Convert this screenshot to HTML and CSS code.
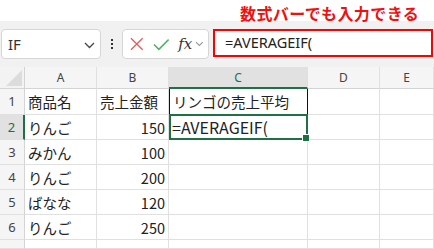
FILE: index.html
```html
<!DOCTYPE html>
<html lang="ja">
<head>
    <meta charset="UTF-8">
    <meta name="viewport" content="width=device-width, initial-scale=1.0">
    <title>数式バー</title>
    <link rel="stylesheet" href="styles.css">
</head>
<body>
    <div class="caption"><span class="caption-text">数式バーでも入力できる</span></div>
    <div class="toolbar">
        <div class="name-box">
            <span class="name-text">IF</span>
            <svg class="chevron" width="11" height="7" viewBox="0 0 11 7"><path d="M1 1 L5.5 5.5 L10 1" fill="none" stroke="#444" stroke-width="1.3"/></svg>
        </div>
        <div class="dots"><i></i><i></i><i></i></div>
        <div class="fx-box">
            <svg width="14" height="14" viewBox="0 0 14 14"><path d="M1 1 L13 13 M13 1 L1 13" stroke="#e06060" stroke-width="1.4"/></svg>
            <svg width="17" height="13" viewBox="0 0 17 13"><path d="M1 6.5 L6 11.5 L16 1.5" fill="none" stroke="#4caf6a" stroke-width="1.5"/></svg>
            <span class="fx">fx</span>
            <svg width="9" height="6" viewBox="0 0 9 6"><path d="M1 1 L4.5 4.5 L8 1" fill="none" stroke="#999" stroke-width="1.2"/></svg>
        </div>
        <div class="formula">=AVERAGEIF(</div>
    </div>
    <div class="sheet">
        <div class="corner"><span class="tri"></span></div>
        <div class="col-head">A</div>
        <div class="col-head">B</div>
        <div class="col-head selected">C</div>
        <div class="col-head">D</div>
        <div class="col-head">E</div>

        <div class="row-head">1</div>
        <div class="cell">商品名</div>
        <div class="cell">売上金額</div>
        <div class="cell boxed">リンゴの売上平均</div>
        <div class="cell"></div>
        <div class="cell"></div>

        <div class="row-head selected">2</div>
        <div class="cell">りんご</div>
        <div class="cell num">150</div>
        <div class="cell active">=AVERAGEIF(</div>
        <div class="cell"></div>
        <div class="cell"></div>

        <div class="row-head">3</div>
        <div class="cell">みかん</div>
        <div class="cell num">100</div>
        <div class="cell"></div>
        <div class="cell"></div>
        <div class="cell"></div>

        <div class="row-head">4</div>
        <div class="cell">りんご</div>
        <div class="cell num">200</div>
        <div class="cell"></div>
        <div class="cell"></div>
        <div class="cell"></div>

        <div class="row-head">5</div>
        <div class="cell">ばなな</div>
        <div class="cell num">120</div>
        <div class="cell"></div>
        <div class="cell"></div>
        <div class="cell"></div>

        <div class="row-head">6</div>
        <div class="cell">りんご</div>
        <div class="cell num">250</div>
        <div class="cell"></div>
        <div class="cell"></div>
        <div class="cell"></div>

        <div class="row-head"></div>
        <div class="cell"></div>
        <div class="cell"></div>
        <div class="cell"></div>
        <div class="cell"></div>
        <div class="cell"></div>
    </div>
</body>
</html>
```

FILE: styles.css
```css
body {
    margin: 0;
    width: 434px;
    height: 249px;
    overflow: hidden;
    background: white;
    font-family: "Noto Sans CJK JP", "Noto Sans", sans-serif;
}
.caption {
    height: 21px;
    box-sizing: border-box;
    padding: 1px 0 0 240px;
    box-shadow: 0 1px 2px rgba(0, 0, 0, 0.12);
}
.caption-text {
    display: inline-block;
    color: #f01010;
    font-weight: bold;
    font-size: 16px;
    line-height: 20px;
    letter-spacing: 0.4px;
    white-space: nowrap;
}
.toolbar {
    height: 46px;
    box-sizing: border-box;
    background: #f1f1f1;
    display: flex;
    align-items: flex-start;
    padding: 8px 1px 0 1px;
}
.name-box {
    width: 100px;
    height: 30px;
    box-sizing: border-box;
    background: white;
    border: 1px solid #d6d6d6;
    border-radius: 4px;
    display: flex;
    align-items: center;
    justify-content: space-between;
    padding: 0 5px 0 6px;
}
.name-text {
    font-family: "Noto Sans", sans-serif;
    font-size: 15px;
    color: #333;
}
.chevron {
    margin-top: 2px;
}
.dots {
    width: 21px;
    height: 30px;
    display: flex;
    flex-direction: column;
    align-items: center;
    justify-content: center;
    gap: 2px;
}
.dots i {
    width: 2px;
    height: 2px;
    background: #333;
}
.fx-box {
    width: 87px;
    height: 30px;
    box-sizing: border-box;
    background: white;
    border: 1px solid #d6d6d6;
    border-radius: 4px;
    display: flex;
    align-items: center;
    padding: 0 4px 0 7px;
    gap: 9px;
}
.fx {
    font-family: "DejaVu Serif", "Liberation Serif", serif;
    font-style: italic;
    font-size: 15px;
    color: #333;
    margin-right: -6px;
}
.formula {
    margin-left: 4px;
    width: 220px;
    height: 28px;
    box-sizing: border-box;
    background: white;
    border: 2px solid #ff0000;
    padding-left: 10px;
    font-family: "Noto Sans", sans-serif;
    font-size: 14.5px;
    line-height: 23px;
    color: #222;
}
.sheet {
    display: grid;
    grid-template-columns: 25px 72px 72px 139px 72px 54px;
    grid-template-rows: 22px 26px 25px 25px 25px 25px 25px 9px;
    font-size: 14.5px;
    color: #222;
}
.corner {
    background: #f3f3f3;
    border-right: 1px solid #d4d4d4;
    border-bottom: 1px solid #d4d4d4;
    box-sizing: border-box;
    position: relative;
}
.tri {
    position: absolute;
    right: 2px;
    bottom: 2px;
    width: 0;
    height: 0;
    border-left: 16px solid transparent;
    border-bottom: 16px solid #dcdcdc;
}
.col-head {
    background: #f5f5f5;
    border-right: 1px solid #e0e0e0;
    border-bottom: 1px solid #d4d4d4;
    box-sizing: border-box;
    text-align: center;
    font-family: "Noto Sans", sans-serif;
    font-size: 12px;
    line-height: 21px;
    color: #444;
}
.col-head.selected {
    background: #e1e1e1;
    color: #1e7145;
    border-bottom: 2px solid #1e7145;
}
.row-head {
    background: #f5f5f5;
    border-right: 1px solid #d4d4d4;
    border-bottom: 1px solid #e0e0e0;
    box-sizing: border-box;
    text-align: center;
    font-family: "Noto Sans", sans-serif;
    font-size: 13px;
    line-height: 25px;
    color: #444;
}
.row-head.selected {
    background: #e1e1e1;
    color: #1e7145;
    border-right: 2px solid #1e7145;
}
.cell {
    border-right: 1px solid #e0e0e0;
    border-bottom: 1px solid #e0e0e0;
    box-sizing: border-box;
    padding: 0 3px;
    line-height: 25px;
    white-space: nowrap;
    overflow: hidden;
}
.cell.num {
    text-align: right;
}
.cell.boxed {
    border-left: 1px solid #111;
    border-right: 1px solid #111;
    border-bottom: 1px solid #111;
}
.cell.active {
    position: relative;
    overflow: visible;
    border: 2px solid #1e7145;
    margin-top: -1px;
    padding-left: 1px;
    line-height: 22px;
    font-size: 16px;
}
.cell.active::after {
    content: "";
    position: absolute;
    right: -4px;
    bottom: -4px;
    width: 6px;
    height: 6px;
    background: #1e7145;
    border: 1px solid white;
}
```
